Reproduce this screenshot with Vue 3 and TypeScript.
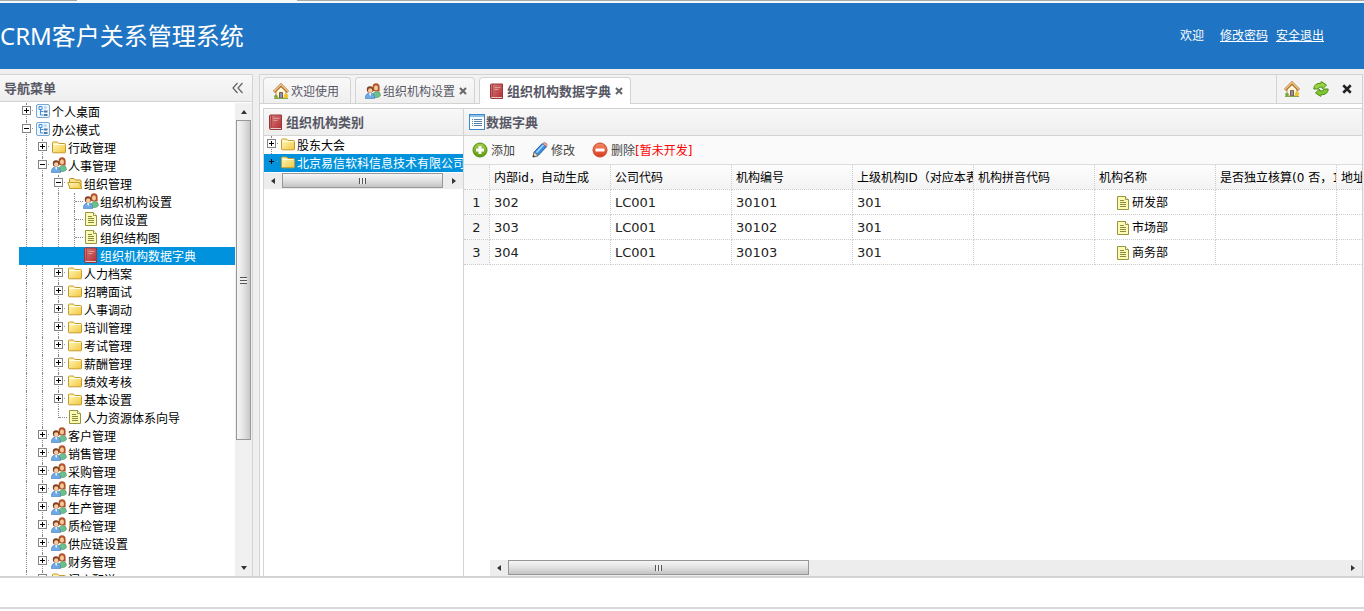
<script setup lang="ts">
import { ref } from 'vue'

type Cell = 'line' | 'empty' | 'plus' | 'minus' | 'elbow' | 'end'

interface TreeRow {
  label: string
  icon: string
  cells: Cell[]
}

const line2: Cell[] = ['line', 'line']
const line3: Cell[] = ['line', 'line', 'line']

const navRows: TreeRow[] = [
  { label: '个人桌面', icon: 'app', cells: ['plus'] },
  { label: '办公模式', icon: 'app', cells: ['minus'] },
  { label: '行政管理', icon: 'folder', cells: ['line', 'plus'] },
  { label: '人事管理', icon: 'users', cells: ['line', 'minus'] },
  { label: '组织管理', icon: 'folder-open', cells: [...line2, 'minus'] },
  { label: '组织机构设置', icon: 'users', cells: [...line3, 'elbow'] },
  { label: '岗位设置', icon: 'page', cells: [...line3, 'elbow'] },
  { label: '组织结构图', icon: 'page', cells: [...line3, 'elbow'] },
  { label: '组织机构数据字典', icon: 'book', cells: [...line3, 'end'] },
  ...['人力档案', '招聘面试', '人事调动', '培训管理', '考试管理', '薪酬管理', '绩效考核', '基本设置'].map(
    (label): TreeRow => ({ label, icon: 'folder', cells: [...line2, 'plus'] }),
  ),
  { label: '人力资源体系向导', icon: 'page', cells: [...line2, 'end'] },
  ...['客户管理', '销售管理', '采购管理', '库存管理', '生产管理', '质检管理', '供应链设置', '财务管理'].map(
    (label): TreeRow => ({ label, icon: 'users', cells: ['line', 'plus'] }),
  ),
  { label: '门店配送', icon: 'folder', cells: ['line', 'plus'] },
]
const navSelected = ref('组织机构数据字典')

const orgRows: TreeRow[] = [
  { label: '股东大会', icon: 'folder', cells: ['plus'] },
  { label: '北京易信软科信息技术有限公司', icon: 'folder', cells: ['plus'] },
]
const orgSelected = ref('北京易信软科信息技术有限公司')

const tabs = [
  { title: '欢迎使用', icon: 'home', closable: false },
  { title: '组织机构设置', icon: 'users', closable: true },
  { title: '组织机构数据字典', icon: 'book', closable: true },
]
const activeTab = ref('组织机构数据字典')

const columns = ['内部id，自动生成', '公司代码', '机构编号', '上级机构ID（对应本表ID）', '机构拼音代码', '机构名称', '是否独立核算(0 否，1 是)', '地址']
const records = [
  { id: '302', company: 'LC001', code: '30101', parent: '301', name: '研发部' },
  { id: '303', company: 'LC001', code: '30102', parent: '301', name: '市场部' },
  { id: '304', company: 'LC001', code: '30103', parent: '301', name: '商务部' },
]
</script>

<template>
  <div class="page">
    <svg class="defs" aria-hidden="true">
      <linearGradient id="gFolder" x1="0" y1="0" x2="1" y2="1"><stop offset="0" stop-color="#fffbc4" /><stop offset="1" stop-color="#f3c73c" /></linearGradient>
      <linearGradient id="gBook" x1="0" y1="0" x2="1" y2="1"><stop offset="0" stop-color="#d98080" /><stop offset="1" stop-color="#b02c30" /></linearGradient>
      <linearGradient id="gAdd" x1="0" y1="0" x2="0" y2="1"><stop offset="0" stop-color="#a3cf4e" /><stop offset="1" stop-color="#5d9a0c" /></linearGradient>
      <linearGradient id="gDel" x1="0" y1="0" x2="0" y2="1"><stop offset="0" stop-color="#f38a64" /><stop offset="1" stop-color="#d93a1c" /></linearGradient>
      <symbol id="i-app" viewBox="0 0 16 16">
        <rect x="1.5" y="1.5" width="13" height="13" rx="1.5" fill="#eef6fd" stroke="#7ba8d3" />
        <path d="M4 3.500h3v3H4zM5.500 6.500v5.500h3M5.500 8.500h3" fill="none" stroke="#3d8ee0" />
        <path d="M9 8.500h3.500M9 12h3.500" stroke="#55779a" stroke-width="2" />
        <path d="M9 4.500h2.500" stroke="#a9cdf0" stroke-width="2" />
      </symbol>
      <symbol id="i-folder" viewBox="0 0 16 16">
        <path d="M1.500 13V4q0-1 1-1h4l1.500 1.500h5.500q1 0 1 1V13q0 .8-.8.8H2.300q-.8 0-.8-.8z" fill="url(#gFolder)" stroke="#c69a2b" />
        <path d="M2.500 5.500h11" stroke="#fffde2" />
      </symbol>
      <symbol id="i-folder-open" viewBox="0 0 16 16">
        <path d="M2.500 13V4.500q0-1 1-1h3.500l1.500 1.500h4.500q1 0 1 1V13z" fill="#f8e28a" stroke="#b78d1f" />
        <path d="M.8 7.500h11.700l2.200 6H3z" fill="url(#gFolder)" stroke="#c69a2b" />
      </symbol>
      <symbol id="i-users" viewBox="0 0 16 16">
        <path d="M7.500 14.500q0-6 4-6t4 4q-1 1.500-3 2z" fill="#6cc08d" stroke="#48956a" stroke-width=".6" />
        <path d="M7.600 8V3.800Q7.600.3 11 .3t3.600 3.500V8.500z" fill="#b0532a" />
        <ellipse cx="11" cy="4.900" rx="2" ry="2.700" fill="#f8c999" />
        <path d="M.3 15.500Q.3 10 5 10t4.700 5.500z" fill="#6fa9e4" stroke="#3f78b8" stroke-width=".6" />
        <path d="M4 10.200l1.200 3 1.200-3z" fill="#fff" />
        <circle cx="5" cy="6.500" r="3.200" fill="#7c3f22" />
        <ellipse cx="5.200" cy="7.600" rx="2.200" ry="2.400" fill="#f8cb9e" />
      </symbol>
      <symbol id="i-page" viewBox="0 0 16 16">
        <path d="M2.500 1.500h8l3 3v10h-11z" fill="#fbfbb6" stroke="#98953f" />
        <path d="M10.500 1.500v3h3" fill="#fff" stroke="#98953f" />
        <path d="M5 5.500h4M5 7.500h6M5 9.500h6M5 11.500h6" stroke="#8c8a3c" />
      </symbol>
      <symbol id="i-book" viewBox="0 0 16 16">
        <path d="M1.500 2q0-1 1-1h11v14.500h-11q-1 0-1-1z" fill="url(#gBook)" stroke="#97373a" />
        <path d="M3.500 1.500v12" stroke="#a84446" /><path d="M5.500 4.500h6M5.500 6.500h4" stroke="#dd9a98" />
        <path d="M2.500 14.500h10.500" stroke="#e6caca" />
      </symbol>
      <symbol id="i-home" viewBox="0 0 16 16">
        <path d="M3 8l5-4.500L13 8v7H3z" fill="#fff6d8" stroke="#b8935a" />
        <path d="M1 9l7-7 7 7" fill="none" stroke="#a76e36" stroke-width="3" /><path d="M1 8.500l7-7 7 7" fill="none" stroke="#efc27a" stroke-width="1.500" />
        <path d="M6.500 9.500h3V15h-3z" fill="#7795c7" stroke="#8a5b38" />
        <circle cx="3" cy="13.500" r="1.800" fill="#72a942" /><circle cx="13" cy="13" r="2.200" fill="#f0c52c" /><path d="M1 15.500h14" stroke="#83a84c" />
      </symbol>
      <symbol id="i-refresh" viewBox="0 0 16 16">
        <path d="M.8 8Q1 2.200 8 2.200L8.300.6 13.500 4 9.500 8l-.4-2Q5.500 5.500 5 8z" fill="#9bd43f" stroke="#478c16" />
        <path d="M15.200 8Q15 13.800 8 13.800l-.3 1.600L2.500 12l4-4 .4 2q3.600.5 4.100-2z" fill="#83c52d" stroke="#478c16" />
      </symbol>
      <symbol id="i-list" viewBox="0 0 16 16">
        <rect x=".5" y=".5" width="15" height="15" fill="#fff" stroke="#3b87c7" /><path d="M1 2h14" stroke="#8bc0ea" stroke-width="2" />
        <path d="M3 5.500h1M5 5.500h8M3 7.500h1M5 7.500h8M3 9.500h1M5 9.500h8M3 11.500h1M5 11.500h8" stroke="#5685ad" />
      </symbol>
      <symbol id="i-add" viewBox="0 0 16 16">
        <circle cx="8" cy="8" r="7" fill="url(#gAdd)" stroke="#558d12" /><path d="M8 4v8M4 8h8" stroke="#fff" stroke-width="3" />
      </symbol>
      <symbol id="i-edit" viewBox="0 0 16 16">
        <path d="M1 15l1.200-5 8-8.500 4 3.500-8.200 8.700z" fill="#3b8ede" stroke="#2360a8" />
        <path d="M4.500 10.500l7-7.500" stroke="#a9d8ff" stroke-width="1.500" />
        <path d="M1 15l1.200-5 3.800 3.700z" fill="#f6dfb5" stroke="#665039" stroke-width=".6" /><path d="M1 15l.6-2 1.400 1.400z" fill="#222" />
        <path d="M10.500 1.500Q12-.3 14 1t.5 4z" fill="#e9aaa4" stroke="#9a6868" stroke-width=".6" />
      </symbol>
      <symbol id="i-remove" viewBox="0 0 16 16">
        <circle cx="8" cy="8" r="7" fill="url(#gDel)" stroke="#c9492d" /><path d="M3.500 8h9" stroke="#fff" stroke-width="3" />
      </symbol>
      <symbol id="i-cross" viewBox="0 0 8 8"><path d="M1 1l6 6M7 1L1 7" stroke="currentColor" stroke-width="2" /></symbol>
      <symbol id="i-chevrons" viewBox="0 0 12 12"><path d="M5.500 1L1 6l4.500 5M10.500 1L6 6l4.500 5" fill="none" stroke="#666" stroke-width="1.300" /></symbol>
      <symbol id="i-arrow" viewBox="0 0 8 8"><path d="M1 6l3-4 3 4z" fill="#333" /></symbol>
    </svg>

    <div class="edge"><i></i><b></b></div>
    <header class="banner">
      <h1>CRM客户关系管理系统</h1>
      <nav><span class="hello">欢迎</span><a href="#">修改密码</a><a href="#">安全退出</a></nav>
    </header>

    <main class="body">
      <aside class="west">
        <div class="panel-head nav-head">
          <h2>导航菜单</h2>
          <button aria-label="收起"><svg class="i12"><use href="#i-chevrons" /></svg></button>
        </div>
        <div class="nav-body">
          <ul class="tree nav-tree">
            <li v-for="row in navRows" :key="row.label" class="row" :class="{ selected: row.label === navSelected }">
              <template v-for="(cell, i) in row.cells" :key="i">
                <button v-if="cell === 'plus' || cell === 'minus'" class="cell knot" :class="cell" :aria-label="'展开 ' + row.label"></button>
                <span v-else class="cell" :class="cell"></span>
              </template>
              <button class="node" @click="navSelected = row.label"><svg class="i16"><use :href="'#i-' + row.icon" /></svg><span>{{ row.label }}</span></button>
            </li>
          </ul>
          <div class="vbar">
            <button aria-label="向上"><svg class="i8"><use href="#i-arrow" /></svg></button>
            <div class="vtrack"><div class="vthumb"><i></i></div></div>
            <button aria-label="向下"><svg class="i8 down"><use href="#i-arrow" /></svg></button>
          </div>
        </div>
      </aside>

      <section class="center">
        <div class="tabbar">
          <div class="tabs">
            <div v-for="tab in tabs" :key="tab.title" class="tab" :class="{ active: tab.title === activeTab }">
              <button class="tab-main" @click="activeTab = tab.title"><svg class="i16"><use :href="'#i-' + tab.icon" /></svg><span>{{ tab.title }}</span></button>
              <button v-if="tab.closable" class="tab-close" :aria-label="'关闭 ' + tab.title"><svg class="i8"><use href="#i-cross" /></svg></button>
            </div>
          </div>
          <div class="tools">
            <button aria-label="首页"><svg class="i16"><use href="#i-home" /></svg></button>
            <button aria-label="刷新"><svg class="i16"><use href="#i-refresh" /></svg></button>
            <button class="dark" aria-label="关闭"><svg class="i10"><use href="#i-cross" /></svg></button>
          </div>
        </div>

        <div class="content">
          <div class="category">
            <div class="panel-head inner"><svg class="i16"><use href="#i-book" /></svg><h2>组织机构类别</h2></div>
            <ul class="tree">
              <li v-for="row in orgRows" :key="row.label" class="row" :class="{ selected: row.label === orgSelected }">
                <button class="cell knot plus" :aria-label="'展开 ' + row.label"></button>
                <button class="node" @click="orgSelected = row.label"><svg class="i16"><use :href="'#i-' + row.icon" /></svg><span>{{ row.label }}</span></button>
              </li>
            </ul>
            <div class="hbar">
              <button aria-label="向左"><svg class="i8 left"><use href="#i-arrow" /></svg></button>
              <div class="htrack"><div class="hthumb wide"><i></i></div></div>
              <button aria-label="向右"><svg class="i8 right"><use href="#i-arrow" /></svg></button>
            </div>
          </div>

          <div class="dictionary">
            <div class="panel-head inner list-head"><svg class="i16"><use href="#i-list" /></svg><h2>数据字典</h2></div>
            <div class="toolbar">
              <button><svg class="i16"><use href="#i-add" /></svg><span>添加</span></button>
              <button><svg class="i16"><use href="#i-edit" /></svg><span>修改</span></button>
              <button><svg class="i16"><use href="#i-remove" /></svg><span>删除<em>[暂未开发]</em></span></button>
            </div>
            <div class="grid">
              <table>
                <colgroup><col class="c-num" /><col v-for="c in columns" :key="c" class="c-data" /></colgroup>
                <thead>
                  <tr><th class="num"></th><th v-for="c in columns" :key="c">{{ c }}</th></tr>
                </thead>
                <tbody>
                  <tr v-for="(r, i) in records" :key="r.id">
                    <td class="num">{{ i + 1 }}</td>
                    <td>{{ r.id }}</td>
                    <td>{{ r.company }}</td>
                    <td>{{ r.code }}</td>
                    <td>{{ r.parent }}</td>
                    <td></td>
                    <td class="name"><div><svg class="i16"><use href="#i-page" /></svg><span>{{ r.name }}</span></div></td>
                    <td></td>
                    <td></td>
                  </tr>
                </tbody>
              </table>
            </div>
            <div class="hbar grid-bar">
              <button aria-label="向左"><svg class="i8 left"><use href="#i-arrow" /></svg></button>
              <div class="htrack"><div class="hthumb"><i></i></div></div>
              <button aria-label="向右"><svg class="i8 right"><use href="#i-arrow" /></svg></button>
            </div>
          </div>
        </div>
      </section>
    </main>
    <footer class="foot"></footer>
  </div>
</template>

<style>
body {
  background: #fff;
}
</style>

<style scoped>
*,
*::before,
*::after {
  box-sizing: border-box;
}
.page {
  display: flex;
  flex-direction: column;
  height: 100vh;
  overflow: hidden;
  font: 12px/18px 'Liberation Sans', 'Noto Sans CJK SC', sans-serif;
  color: #000;
}
.defs {
  position: absolute;
  width: 0;
  height: 0;
}
button {
  display: flex;
  align-items: center;
  margin: 0;
  padding: 0;
  border: 0;
  background: none;
  font: inherit;
  color: inherit;
  white-space: nowrap;
}
svg {
  flex: none;
  display: block;
}
.i16 {
  width: 16px;
  height: 16px;
}
.i12 {
  width: 12px;
  height: 12px;
}
.i10 {
  width: 10px;
  height: 10px;
}
.i8 {
  width: 8px;
  height: 8px;
}
.down {
  transform: rotate(180deg);
}
.left {
  transform: rotate(-90deg);
}
.right {
  transform: rotate(90deg);
}
.edge {
  flex: none;
  display: flex;
  gap: 220px;
  height: 3px;
  background: #f4fafc;
}
.edge i {
  width: 77px;
  height: 1px;
  background: #a5a9b5;
}
.edge b {
  flex: 1;
  height: 1px;
  background: #a5a9b5;
}
.banner {
  flex: none;
  display: flex;
  align-items: center;
  justify-content: space-between;
  height: 66px;
  padding-right: 40px;
  background: #1f75c3;
  color: #fff;
}
h1 {
  margin: 0;
  font: 24px/36px 'Noto Sans', 'Noto Sans CJK SC', sans-serif;
}
.banner nav {
  display: flex;
  gap: 8px;
}
.hello {
  margin-right: 8px;
}
.banner a {
  color: #fff;
}
.body {
  flex: 1;
  min-height: 0;
  display: flex;
  gap: 6px;
  padding: 5px 1px 0 0;
  border-bottom: 2px solid #d3d3d3;
  background: #efefef;
}
.west {
  flex: none;
  display: flex;
  flex-direction: column;
  width: 253px;
  border: solid #d3d3d3;
  border-width: 1px 1px 0 0;
  background: #fff;
}
.panel-head {
  flex: none;
  display: flex;
  align-items: center;
  border-bottom: 1px solid #d3d3d3;
  background: linear-gradient(#f8f8f8, #eeeeee);
}
h2 {
  margin: 0;
  padding-top: 2px;
  font-size: 13px;
  line-height: 18px;
  font-weight: bold;
  color: #575765;
}
.nav-head {
  justify-content: space-between;
  height: 27px;
  padding: 0 8px 0 4px;
}
.nav-body {
  flex: 1;
  min-height: 0;
  display: flex;
  padding-top: 1px;
}
.tree {
  margin: 0;
  padding: 0;
  list-style: none;
  overflow: hidden;
}
.nav-tree {
  flex: 1;
  padding-left: 19px;
}
.row {
  display: flex;
  height: 18px;
}
.cell {
  position: relative;
  flex: none;
  width: 16px;
  height: 18px;
}
.line::before,
.elbow::before,
.end::before,
.knot::before {
  content: '';
  position: absolute;
  left: 7px;
  top: 0;
  height: 18px;
  border-left: 1px dotted #888;
}
.end::before {
  height: 9px;
}
.elbow::after,
.end::after {
  content: '';
  position: absolute;
  left: 8px;
  right: 0;
  top: 8px;
  border-top: 1px dotted #888;
}
.knot {
  background: linear-gradient(#999, #999) 13px 7px / 1px 1px no-repeat;
}
.knot::after {
  content: '';
  position: absolute;
  left: 3px;
  top: 3px;
  width: 9px;
  height: 9px;
  border: 1px solid #848484;
  background:
    linear-gradient(#000, #000) 1px 3px / 5px 1px no-repeat,
    #fff;
}
.plus::after {
  background:
    linear-gradient(#000, #000) 1px 3px / 5px 1px no-repeat,
    linear-gradient(#000, #000) 3px 1px / 1px 5px no-repeat,
    #fff;
}
.node {
  align-items: flex-start;
  gap: 1px;
  height: 18px;
  line-height: 20px;
}
.selected {
  background: #0092dc;
  color: #fff;
}
.selected .cell::before,
.selected .line::after,
.selected .end::after {
  display: none;
}
.selected .knot::after {
  border-color: transparent;
  background-color: transparent;
}
.vbar {
  flex: none;
  display: flex;
  flex-direction: column;
  width: 17px;
  padding: 0 1px;
  background: #f0f0f0;
}
.vbar button {
  flex: none;
  justify-content: center;
  width: 16px;
  height: 17px;
}
.hbar button {
  flex: none;
  justify-content: center;
  width: 18px;
  height: 16px;
}
.vtrack {
  flex: 1;
}
.vthumb {
  display: flex;
  align-items: center;
  justify-content: center;
  width: 15px;
  height: 73%;
  border: 1px solid #979797;
  background: linear-gradient(90deg, #f5f5f5, #e6e6e6 45%, #c8c8c8);
}
.vthumb i {
  width: 7px;
  height: 7px;
  background: repeating-linear-gradient(#555 0 1px, #eee 1px 3px);
}
.center {
  flex: 1;
  min-width: 0;
  display: flex;
  flex-direction: column;
  border: 1px solid #d3d3d3;
  border-bottom: 0;
  background: #fff;
}
.tabbar {
  flex: none;
  display: flex;
  justify-content: space-between;
  height: 29px;
  border-bottom: 1px solid #d3d3d3;
  background: #f3f3f3;
}
.tabs {
  display: flex;
  gap: 4px;
  padding: 2px 0 0 3px;
}
.tab {
  display: flex;
  align-items: center;
  gap: 4px;
  height: 26px;
  padding: 0 7px 0 9px;
  border: 1px solid #d3d3d3;
  border-bottom: 0;
  border-radius: 4px 4px 0 0;
  background: linear-gradient(#f9f9f9, #efefef);
  color: #575765;
}
.tab:first-child {
  padding-right: 11px;
}
.tab.active {
  height: 27px;
  background: #fff;
  font-size: 13px;
  font-weight: bold;
}
.tab-main {
  gap: 2px;
}
.tab-main span {
  padding-top: 2px;
}
.tab-close {
  color: #666;
}
.tools {
  display: flex;
  align-items: center;
  gap: 13px;
  padding: 0 10px 0 7px;
  border-left: 1px solid #d3d3d3;
}
.dark {
  color: #222;
}
.content {
  flex: 1;
  min-height: 0;
  display: flex;
  margin: 4px 0 0 3px;
  border: solid #d3d3d3;
  border-width: 1px 0 0 1px;
}
.category {
  flex: none;
  width: 200px;
  border-right: 1px solid #d3d3d3;
}
.inner {
  gap: 2px;
  height: 27px;
  padding-left: 4px;
}
.hbar {
  flex: none;
  display: flex;
  height: 16px;
  background: #ededed;
}
.htrack {
  flex: 1;
}
.hthumb {
  display: flex;
  align-items: center;
  justify-content: center;
  width: 36%;
  height: 15px;
  border: 1px solid #979797;
  background: linear-gradient(#f5f5f5, #e4e4e4 45%, #c4c4c4);
}
.category .hbar {
  margin-top: 1px;
}
.hthumb.wide {
  width: 99%;
}
.hthumb i {
  width: 7px;
  height: 6px;
  background: repeating-linear-gradient(90deg, #555 0 1px, #eee 1px 3px);
}
.dictionary {
  flex: 1;
  min-width: 0;
  display: flex;
  flex-direction: column;
}
.list-head {
  gap: 1px;
  padding-left: 5px;
}
.toolbar {
  flex: none;
  display: flex;
  gap: 17px;
  height: 29px;
  padding-left: 8px;
  border-bottom: 1px solid #ddd;
  background: #fafafa;
  color: #444;
}
.toolbar button {
  gap: 3px;
}
.toolbar span {
  padding-top: 2px;
}
.toolbar em {
  font-style: normal;
  font-family: 'DejaVu Sans', 'Noto Sans CJK SC', sans-serif;
  color: #f00;
}
.grid {
  flex: 1;
  min-height: 0;
  overflow: hidden;
}
table {
  width: 994px;
  table-layout: fixed;
  border-collapse: separate;
  border-spacing: 0;
}
.c-num {
  width: 26px;
}
.c-data {
  width: 121px;
}
th,
td {
  height: 25px;
  padding: 2px 0 0 4px;
  border: dotted #ccc;
  border-width: 0 1px 1px 0;
  overflow: hidden;
  white-space: nowrap;
  text-align: left;
  font-weight: normal;
  font-family: 'DejaVu Sans', 'Noto Sans CJK SC', sans-serif;
}
th {
  background: linear-gradient(#fdfdfd, #f3f3f3);
}
td {
  font-size: 13px;
  color: #222;
}
.num {
  padding: 2px 0 0;
  text-align: center;
  background: #f7f7f7;
}
.name div {
  display: flex;
  align-items: center;
  gap: 1px;
  padding-left: 16px;
  font-size: 12px;
  color: #000;
}
.grid-bar {
  margin-left: 26px;
}
.foot {
  flex: none;
  height: 31px;
  margin-bottom: 2px;
  border-bottom: 2px solid #d9d9d9;
  background: #fff;
}
</style>
